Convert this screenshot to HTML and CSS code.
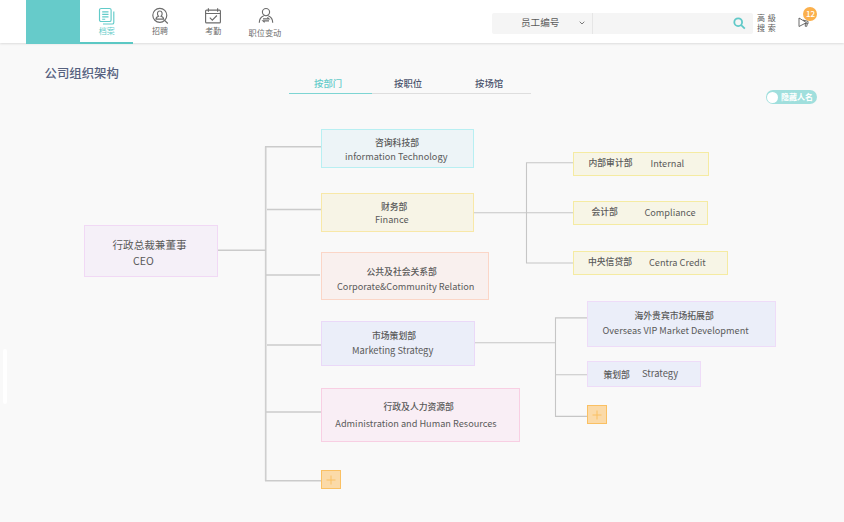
FILE: index.html
```html
<!DOCTYPE html>
<html lang="zh-CN">
<head>
<meta charset="utf-8">
<title>公司组织架构</title>
<link rel="stylesheet" href="styles.css">
</head>
<body>
<header class="topbar">
  <div class="brand"></div>
  <nav class="nav">
    <a class="nav-item active">
      <svg class="icon" viewBox="0 0 18 18"><rect x="1.5" y="1.500" width="11.6" height="13" rx="1.6"/><path d="M4.2 4.800h6.3M4.2 7.400h6.3M4.2 9.900h6.3M4.2 12.200h3M15.8 4.500v10.900q0 1.6-1.6 1.6H5"/></svg>
      <span>档案</span>
    </a>
    <a class="nav-item">
      <svg class="icon" viewBox="0 0 18 18"><circle cx="8.8" cy="8.300" r="7"/><path d="M13.6 13.300l3.2 3.200M5 12.100q0-2 2.6-2.8c-2-2-1.3-5.3 1.2-5.3s3.2 3.3 1.2 5.3q2.6.8 2.6 2.8z"/></svg>
      <span>招聘</span>
    </a>
    <a class="nav-item">
      <svg class="icon" viewBox="0 0 18 18"><rect x="1.6" y="3.100" width="14.8" height="12.8" rx="1"/><path d="M1.6 6.500h14.800M4.400 1.300v3.400M13.600 1.300v3.400M5.800 10.700l2.500 2.400 4.600-4.600"/></svg>
      <span>考勤</span>
    </a>
    <a class="nav-item wide">
      <svg class="icon" viewBox="0 0 18 18"><circle cx="9" cy="5.100" r="3.600"/><path d="M2.300 15.700c0-3.600 1.800-6 4.500-7M15.700 15.700c0-3.600-1.800-6-4.500-7M6 11.900h6l-1.600-1.500M12 13.900H6l1.600 1.500"/></svg>
      <span>职位变动</span>
    </a>
  </nav>
  <div class="search">
    <div class="search-type"><span>员工编号</span><svg class="chevron" viewBox="0 0 6 4"><path d="M.7.7L3 3 5.300.7"/></svg></div>
    <div class="search-field"><svg class="lens" viewBox="0 0 13 13"><circle cx="5.200" cy="5.200" r="3.900"/><path d="M8.200 8.200l3.600 3.400"/></svg></div>
  </div>
  <div class="advanced"><span>高 級</span><span>搜 索</span></div>
  <div class="notice">
    <svg class="horn" viewBox="0 0 12 11"><path d="M1 1v8.500L8.500 5.600zM5 3.100L10 4.300v2.500L7 6.500M7.300 6.500v2.800h1.500l.4-2.500"/></svg>
    <span class="badge">12</span>
  </div>
</header>
<main class="page">
  <h1 class="title">公司组织架构</h1>
  <div class="tabs">
    <a class="tab selected">按部门</a><a class="tab">按职位</a><a class="tab last">按场馆</a>
  </div>
  <div class="toggle"><i class="knob"></i><span>隐藏人名</span></div>
</main>
<i class="drawer"></i>
<section class="chart">
  <svg class="links" viewBox="0 0 844 522">
    <path class="trunk" d="M265.700 146.500V481"/>
    <path class="heavy" d="M217 250.200h49M265 146.700h56M267 209.500h54M266 275h54M267 345h54M266 412h55M265 480.700h56"/>
    <path d="M474 212.700h99M574 162.700h-47.500V263H573M475 342.800h80.500M587 317.900h-31.500v98.500H587M556 374.700h31"/>
  </svg>
  <div class="node ceo"><b>行政总裁兼董事</b><span>CEO</span></div>
  <div class="node it"><b>咨询科技部</b><span>information Technology</span></div>
  <div class="node finance"><b>财务部</b><span>Finance</span></div>
  <div class="node relation"><b>公共及社会关系部</b><span>Corporate&amp;Community Relation</span></div>
  <div class="node marketing"><b>市场策划部</b><span>Marketing Strategy</span></div>
  <div class="node hr"><b>行政及人力资源部</b><span>Administration and Human Resources</span></div>
  <div class="node row internal"><b>内部审计部</b><span>Internal</span></div>
  <div class="node row compliance"><b>会计部</b><span>Compliance</span></div>
  <div class="node row credit"><b>中央信贷部</b><span>Centra Credit</span></div>
  <div class="node overseas"><b>海外贵宾市场拓展部</b><span>Overseas VIP Market Development</span></div>
  <div class="node row strategy"><b>策划部</b><span>Strategy</span></div>
  <div class="add add-root"><svg viewBox="0 0 10 10"><path d="M5 .5v9M.5 5h9"/></svg></div>
  <div class="add add-marketing"><svg viewBox="0 0 10 10"><path d="M5 .5v9M.5 5h9"/></svg></div>
</section>
</body>
</html>
```
FILE: styles.css
```css
* { box-sizing: border-box; }
body {
  margin: 0;
  position: relative;
  width: 844px;
  height: 522px;
  overflow: hidden;
  background: #f9f9f9;
  font-family: "Noto Sans CJK SC", sans-serif;
  color: #5a5a5a;
}
svg { display: block; fill: none; stroke: currentColor; }

.topbar {
  display: flex;
  height: 43px;
  background: #fff;
  box-shadow: 0 1px 2px #dcdcdc;
}
.brand { width: 54.500px; height: 44px; margin-left: 25.500px; background: #66cbca; }
.nav { display: flex; height: 44px; }
.nav-item {
  display: flex;
  flex-direction: column;
  align-items: center;
  width: 53.300px;
  padding-top: 7px;
  font-size: 8px;
  line-height: 12px;
  color: #6c6c6c;
  white-space: nowrap;
}
.nav-item.active { border-bottom: 2px solid #5bc8c4; color: #62cbc9; }
.nav-item.wide { width: 52px; font-size: 8.200px; }
.nav-item.wide span { margin: .5px 2px 0 0; }
.icon { width: 18px; height: 18px; stroke-width: 1.150; }

.search {
  display: flex;
  width: 261px;
  height: 21px;
  margin: 12.500px 0 0 200.100px;
  border-radius: 2px;
  background: #f5f5f5;
}
.search-type {
  display: flex;
  align-items: center;
  justify-content: space-between;
  width: 101px;
  padding: 0 7px 0 29px;
  border-right: 1px solid #e6e6e6;
  font-size: 9.600px;
  line-height: 20px;
}
.search-type span { margin-top: -2px; }
.chevron { width: 6px; height: 4px; stroke-width: .8; }
.search-field { display: flex; flex: 1; align-items: center; justify-content: flex-end; padding-right: 7px; }
.lens { width: 13px; height: 13px; color: #60c9c8; stroke-width: 1.800; }
.advanced {
  display: flex;
  flex-direction: column;
  width: 30px;
  padding: 12.500px 0 0 4px;
  font-size: 8px;
  line-height: 10px;
  word-spacing: 1px;
  white-space: nowrap;
}
.notice { position: relative; margin: 17px 0 0 15.500px; }
.horn { width: 12px; height: 11px; stroke-width: .9; }
.badge {
  position: absolute;
  left: 5px;
  top: -10px;
  width: 14px;
  height: 14px;
  border-radius: 50%;
  background: #fbb04c;
  color: #fff;
  font-size: 8px;
  font-weight: 500;
  line-height: 13px;
  text-align: center;
}

.page { display: flex; align-items: flex-start; }
.title { width: 289px; margin: 20px 0 0; padding-left: 44.500px; font-size: 12.400px; font-weight: 500; line-height: 20px; color: #56617f; }
.tabs { display: flex; margin-top: 33px; }
.tab {
  width: 80px;
  height: 18px;
  padding-left: 22px;
  border-bottom: 1px solid #dedede;
  font-size: 9.400px;
  font-weight: 500;
  line-height: 15px;
  color: #4a526c;
}
.tab.selected { width: 83px; padding-left: 25px; border-bottom-color: #7dd5d3; color: #63cbc9; }
.tab.last { width: 79px; padding-left: 23px; }
.toggle {
  display: flex;
  align-items: center;
  gap: 3px;
  width: 51px;
  height: 14px;
  margin: 47px 0 0 235px;
  padding-left: 1px;
  border-radius: 7px;
  background: #a0dfdd;
  color: #fff;
  font-size: 8px;
  font-weight: 700;
  line-height: 14px;
  white-space: nowrap;
}
.knob { flex: none; width: 11px; height: 11px; border-radius: 50%; background: #fff; }
.drawer { position: absolute; left: 3px; top: 349px; width: 4px; height: 55px; border-radius: 2px; background: #fff; }

/* Org chart canvas */
.chart { position: absolute; inset: 0; pointer-events: none; }
.links { position: absolute; inset: 0; width: 844px; height: 522px; color: #c6c6c6; stroke-width: 1.100; }
.links .trunk { stroke-width: 1.700; stroke: #cfcfcf; }
.links .heavy { stroke-width: 1.500; stroke: #cbcbcb; }
.node {
  position: absolute;
  display: flex;
  flex-direction: column;
  align-items: flex-start;
  border: 1px solid;
  font-size: 9.200px;
  line-height: 14px;
  white-space: nowrap;
}
.node b { font-size: 8.800px; font-weight: 500; }
.node.row { flex-direction: row; }

.ceo { left: 84px; top: 225px; width: 133.500px; height: 52px; padding: 11px 0 0 27.500px; background: #f5f0f8; border-color: #f1d9f5; font-size: 10.500px; line-height: 16px; }
.ceo b { font-size: 10.600px; font-weight: 400; }
.ceo span { margin-left: 20.500px; }
.it { left: 321px; top: 129px; width: 152.500px; height: 39px; padding: 6px 0 0 53px; background: #edf4f7; border-color: #b8eff2; line-height: 13.500px; }
.it span { margin-left: -30px; }
.finance { left: 321px; top: 192.500px; width: 153px; height: 39px; padding: 6px 0 0 59px; background: #f7f4e6; border-color: #f8e8a8; line-height: 13px; }
.finance span { margin-left: -6px; }
.relation { left: 321px; top: 252px; width: 168px; height: 48px; padding: 10.500px 0 0 44.500px; background: #f9f0ee; border-color: #fbd6c7; line-height: 15px; }
.relation span { margin-left: -29.500px; }
.marketing { left: 321px; top: 321px; width: 153.500px; height: 45px; padding: 6px 0 0 50px; background: #ebeef9; border-color: #ead9f8; line-height: 15px; }
.marketing span { margin-left: -20px; font-size: 9.300px; }
.hr { left: 321px; top: 388px; width: 199px; height: 53.500px; padding: 10px 0 0 61.500px; background: #f9eef5; border-color: #f8cfe3; line-height: 16px; }
.hr span { margin: -.5px 0 0 -48.200px; }
.internal, .compliance, .credit { background: #f7f5e6; border-color: #f5eba2; }
.internal { left: 573px; top: 152px; width: 136px; height: 24px; padding: 3px 0 0 14.500px; }
.internal span { margin-left: 18px; }
.compliance { left: 572.500px; top: 201px; width: 135.500px; height: 24px; padding: 2.500px 0 0 18px; }
.compliance span { margin: .5px 0 0 26.500px; }
.credit { left: 572.500px; top: 251px; width: 155px; height: 24px; padding: 2.500px 0 0 14.500px; }
.credit span { margin-left: 17px; }
.overseas, .strategy { background: #ebeef9; border-color: #eedcf8; }
.overseas { left: 587px; top: 301px; width: 189px; height: 46px; padding: 7px 0 0 46.500px; }
.overseas span { margin-left: -32px; }
.strategy { left: 587px; top: 361px; width: 114px; height: 26px; padding: 3.500px 0 0 15.500px; }
.strategy b { margin-top: 2px; }
.strategy span { margin-left: 12px; font-size: 9.400px; }
.add {
  position: absolute;
  display: flex;
  align-items: center;
  justify-content: center;
  width: 20px;
  height: 19px;
  border: 1px solid #fac063;
  background: #fbdaa8;
  color: #fac063;
}
.add svg { width: 10px; height: 10px; }
.add-root { left: 321px; top: 470px; }
.add-marketing { left: 587px; top: 405px; }
```
